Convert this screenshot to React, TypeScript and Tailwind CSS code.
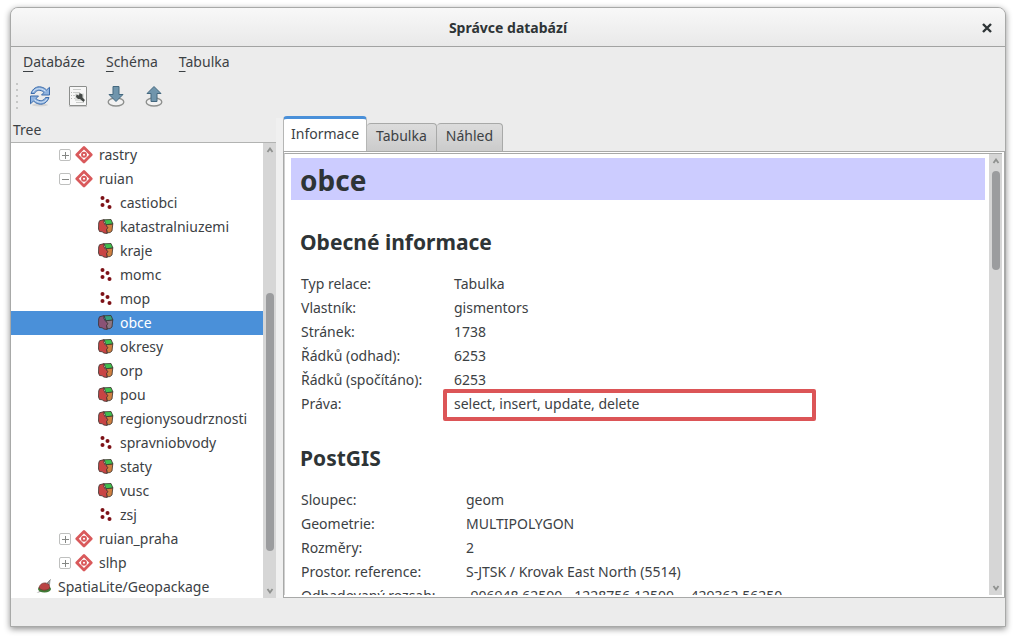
import React from "react";

type IconKind = "points" | "polygon";

const PointsIcon = () => (
  <svg width="16" height="16" viewBox="0 0 16 16" fill="#7d1116" aria-hidden="true">
    <circle cx="4.500" cy="3" r="2" />
    <circle cx="9.500" cy="6" r="2" />
    <circle cx="4.500" cy="10" r="2" />
    <circle cx="11.500" cy="12" r="2" />
  </svg>
);

const PolygonIcon = ({ dim = false }: { dim?: boolean }) => (
  <svg width="16" height="16" viewBox="0 0 16 16" stroke="#3a302c" strokeWidth="0.8" strokeLinejoin="round" aria-hidden="true">
    <path d="M8 5.500 14.800 4.800 14 12 12 13.600 9 13.800Z" fill={dim ? "#8d7683" : "#cf8040"} />
    <path d="M6 0.800 13 0.500 14.900 4.800 8 5.800Z" fill={dim ? "#36a07c" : "#3fc04f"} />
    <path d="M1.500 1.800 6 0.600 5.800 3.500 7.500 6.200 10 8.500 8.500 10.500 9.200 14.500 5.500 14 4.500 12.800 1.500 12.500 0.500 10 0.700 4Z" fill={dim ? "#8a5275" : "#c84444"} />
  </svg>
);

const SchemaIcon = () => (
  <svg width="18" height="18" viewBox="0 0 18 18" fill="none" stroke="#d9595b" strokeLinejoin="round" aria-hidden="true">
    <path d="M9 1.500 16.200 8.700 9 15.900 1.800 8.700Z" strokeWidth="2.800" />
    <circle cx="9" cy="8.700" r="2" strokeWidth="1.900" />
  </svg>
);

const FeatherIcon = () => (
  <svg width="18" height="16" viewBox="0 0 18 16" aria-hidden="true">
    <path d="M0.500 14 5 11 11.500 3.500 14.500 0.500 14 6 8 12Z" fill="#9a9c9a" />
    <ellipse cx="8.500" cy="10" rx="6.500" ry="3.500" fill="#3f7a35" />
    <path d="M3 9C3.500 5.500 6.500 3.500 10 4 13 4.500 14 7 13.500 9.500 9.500 12 5.500 11.500 3 9Z" fill="#b94343" stroke="#713030" strokeWidth="0.700" />
    <path d="M10.500 5 14.500 0.500" stroke="#7d817e" />
  </svg>
);

const RefreshIcon = () => (
  <svg width="24" height="24" viewBox="0 0 24 24" strokeLinejoin="round" aria-hidden="true">
    <ellipse cx="12" cy="21" rx="8" ry="1.500" fill="#d5d5d5" />
    <g fill="#8fb3df" stroke="#3c6cab" strokeWidth="1">
      <path d="M3 9.500C4.500 4.500 9 2 13 3 15.500 3.500 17.500 4.800 18.500 6L21.500 3.300V11H13.500L16 8.500C12.500 5 8 6 6.500 9.500Z" />
      <path d="M21 13.500C19.500 18.500 15 21 11 20 8.500 19.500 6.500 18.300 5.500 17L2.500 19.800V12H10.500L8 14.500C11.500 18 16 17 17.500 13.500Z" />
    </g>
    <path d="M5 8C7.500 4 13 3.500 17.500 7.200M19 15C16.500 19 11 19.500 6.500 15.800" fill="none" stroke="#d3e3f5" />
  </svg>
);

const SqlIcon = () => (
  <svg width="24" height="24" viewBox="0 0 24 24" aria-hidden="true">
    <path d="M3 22.500H21" stroke="#c9c9c9" />
    <rect x="3.500" y="2.500" width="17" height="19" rx="0.500" fill="#f7f7f7" stroke="#8c8e8c" />
    <path d="M7 5.500h8M7 8.500h7M7 11.500h5M8 14.500h5M10 18.500h8" stroke="#c9cbc9" />
    <path d="M5.500 8v9" stroke="#b4b6b4" strokeDasharray="1 2" />
    <path d="M9 9.500H18V17H9Z" fill="#dcdedc" />
    <path d="M10.500 10.500 13 11.500 13.500 9 16.500 10.500V13.500L19 16 17.500 18 14 15H12L10 13Z" fill="#454947" />
  </svg>
);

const TransferIcon = ({ up = false }: { up?: boolean }) => (
  <svg width="24" height="24" viewBox="0 0 24 24" strokeLinejoin="round" aria-hidden="true">
    <ellipse cx="12" cy="18" rx="7.800" ry="4" fill="#f2f2f2" stroke="#8f918f" strokeWidth="1.400" />
    <path
      d={up ? "M12 2.500 19 9.500H15V17.500H9V9.500H5Z" : "M9 2.500H15V10.500H19L12 17.500 5 10.500H9Z"}
      fill="#7095ac"
      stroke="#44687f"
    />
  </svg>
);

const Chevron = ({ up = false }: { up?: boolean }) => (
  <svg width="8" height="6" viewBox="0 0 8 6" fill="none" stroke="#8f918f" strokeWidth="1.800" aria-hidden="true">
    <path d={up ? "M1.500 5 4 1.500 6.500 5" : "M1.500 1 4 4.500 6.500 1"} />
  </svg>
);

const tables: { name: string; icon: IconKind }[] = [
  { name: "castiobci", icon: "points" },
  { name: "katastralniuzemi", icon: "polygon" },
  { name: "kraje", icon: "polygon" },
  { name: "momc", icon: "points" },
  { name: "mop", icon: "points" },
  { name: "obce", icon: "polygon" },
  { name: "okresy", icon: "polygon" },
  { name: "orp", icon: "polygon" },
  { name: "pou", icon: "polygon" },
  { name: "regionysoudrznosti", icon: "polygon" },
  { name: "spravniobvody", icon: "points" },
  { name: "staty", icon: "polygon" },
  { name: "vusc", icon: "polygon" },
  { name: "zsj", icon: "points" },
];

const general: [string, string][] = [
  ["Typ relace:", "Tabulka"],
  ["Vlastník:", "gismentors"],
  ["Stránek:", "1738"],
  ["Řádků (odhad):", "6253"],
  ["Řádků (spočítáno):", "6253"],
  ["Práva:", "select, insert, update, delete"],
];

const postgis: [string, string][] = [
  ["Sloupec:", "geom"],
  ["Geometrie:", "MULTIPOLYGON"],
  ["Rozměry:", "2"],
  ["Prostor. reference:", "S-JTSK / Krovak East North (5514)"],
  ["Odhadovaný rozsah:", "-906948.62500, -1228756.12500 - -429362.56250"],
];

function SchemaRow({ name, open = false }: { name: string; open?: boolean }) {
  return (
    <li role="treeitem" aria-expanded={open} className="flex h-6 items-center pl-12">
      <button
        aria-label={name}
        className="mr-1 flex size-3 items-center justify-center rounded-[2px] border border-[#bfc0bf] bg-white"
      >
        <svg width="8" height="8" viewBox="0 0 8 8" stroke="#858785" aria-hidden="true">
          <path d={open ? "M1 4.500H8" : "M1 4.500H8M4.500 1V8"} />
        </svg>
      </button>
      <SchemaIcon />
      <span className="pl-1.5">{name}</span>
    </li>
  );
}

function TableRow({ name, icon }: { name: string; icon: IconKind }) {
  const selected = name === "obce";
  return (
    <li
      role="treeitem"
      aria-selected={selected}
      className={`flex h-6 items-center pl-[87px] ${selected ? "bg-[#4a90d9] text-white" : ""}`}
    >
      {icon === "points" ? <PointsIcon /> : <PolygonIcon dim={selected} />}
      <span className="pl-1.5">{name}</span>
    </li>
  );
}

function Details({ rows, label }: { rows: [string, string][]; label: string }) {
  return (
    <table className="border-collapse text-left" aria-label={label}>
      <tbody>
        {rows.map(([key, value]) => (
          <tr key={key} className="h-6">
            <th scope="row" className={`p-0 font-normal whitespace-nowrap ${label === "PostGIS" ? "w-[165px] min-w-[165px]" : "w-[153px] min-w-[153px]"}`}>
              {key}
            </th>
            <td className="relative p-0 whitespace-nowrap">
              {value}
              {key === "Práva:" && (
                <span className="absolute -top-[3px] -left-[11px] h-8 w-[373px] rounded-[2px] border-4 border-[#dc5557]" />
              )}
            </td>
          </tr>
        ))}
      </tbody>
    </table>
  );
}

export default function App() {
  return (
    <div className="h-screen bg-white px-[10px] pt-[7px] pb-[9px] font-['Noto_Sans','Open_Sans',sans-serif] text-sm leading-6 text-[#3c4144]">
      <main className="flex h-full flex-col overflow-hidden rounded-t-lg border border-[#a8a9a8] bg-[#ececec] shadow-[0_2px_6px_rgba(0,0,0,0.45)]">
        <header className="flex h-[39px] shrink-0 items-center border-b border-[#a2a3a2] bg-linear-to-b from-[#f8f8f8] to-[#e9e9e9] px-[10px] pt-px">
          <span className="w-4" />
          <h1 className="flex-1 text-center text-sm font-bold text-[#2e3436]">Správce databází</h1>
          <button aria-label="Zavřít" className="flex w-4 justify-center">
            <svg width="10" height="10" viewBox="0 0 10 10" stroke="#2e3436" strokeWidth="2.400" aria-hidden="true">
              <path d="M1 1 9 9M9 1 1 9" />
            </svg>
          </button>
        </header>

        <nav className="flex h-[30px] shrink-0 items-center gap-[21px] pl-3">
          {["Databáze", "Schéma", "Tabulka"].map((item) => (
            <button key={item} className="first-letter:underline first-letter:underline-offset-4">
              {item}
            </button>
          ))}
        </nav>

        <div className="flex h-[38px] shrink-0 items-center gap-[14px] pl-[5px]">
          <svg width="3" height="26" viewBox="0 0 3 26" fill="#c6c7c6" className="-mr-[5px]" aria-hidden="true">
            <path d="M0 0h2v2H0zM0 6h2v2H0zM0 12h2v2H0zM0 18h2v2H0zM0 24h2v2H0z" />
          </svg>
          <button aria-label="Obnovit"><RefreshIcon /></button>
          <button aria-label="SQL okno"><SqlIcon /></button>
          <button aria-label="Import"><TransferIcon /></button>
          <button aria-label="Export"><TransferIcon up /></button>
        </div>

        <div className="flex min-h-0 flex-1">
          <section className="flex w-[265px] shrink-0 flex-col pt-[3px]">
            <h2 className="h-6 pl-0.5">Tree</h2>
            <div className="flex min-h-0 flex-1 border-t border-[#b2b3b2] bg-white">
              <ul role="tree" className="min-w-0 flex-1 overflow-hidden">
                <SchemaRow name="rastry" />
                <SchemaRow name="ruian" open />
                {tables.map((table) => (
                  <TableRow key={table.name} {...table} />
                ))}
                <SchemaRow name="ruian_praha" />
                <SchemaRow name="slhp" />
                <li role="treeitem" className="flex h-6 items-center gap-1 pl-[25px]">
                  <FeatherIcon />
                  <span>SpatiaLite/Geopackage</span>
                </li>
              </ul>
              <div className="flex w-[13px] shrink-0 flex-col items-center justify-between bg-[#d6d6d6] pt-1 pb-1">
                <Chevron up />
                <div className="flex w-2 flex-1 flex-col pt-[140px] pb-[37px]">
                  <div className="flex-1 rounded-full bg-[#9b9c9e]" />
                </div>
                <Chevron />
              </div>
            </div>
          </section>

          <div className="mt-[3px] w-[7px] shrink-0 bg-[#f0f0f0]" />

          <section className="flex min-w-0 flex-1 flex-col pt-px">
            <div role="tablist" className="flex h-[35px] shrink-0 items-end">
              <button role="tab" aria-selected="true" className="h-[35px] rounded-t border-x border-t-[3px] border-x-[#b5b6b5] border-t-[#4a90d9] bg-white px-[7px] pb-[2px]">
                Informace
              </button>
              {["Tabulka", "Náhled"].map((tab) => (
                <button key={tab} role="tab" aria-selected="false" className="h-7 rounded-t border-t border-r border-[#a8a9a8] bg-linear-to-b from-[#dcdcdc] to-[#cbcbcb] px-[9px] pb-[4px]">
                  {tab}
                </button>
              ))}
            </div>
            <div className="flex min-h-0 flex-1 border border-[#a8a9a8] bg-white pt-px pb-[2px]">
              <article className="min-w-0 flex-1 overflow-hidden border-t border-l border-t-[#a8a9a8] border-l-[#d0d0d0] pt-1 pr-1 pl-[6px]">
                <h2 className="h-[42px] bg-[#ccccff] pl-[9px] text-[28px] leading-[44px] font-bold text-[#2e3436]">obce</h2>
                <div className="pl-[9px]">
                  <h3 className="mt-[26px] mb-[14px] text-[21px] leading-8 font-bold text-[#2e3436]">Obecné informace</h3>
                  <div className="pl-px"><Details rows={general} label="Obecné informace" /></div>
                  <h3 className="mt-[26px] mb-[14px] text-[21px] leading-8 font-bold text-[#2e3436]">PostGIS</h3>
                  <div className="pl-px"><Details rows={postgis} label="PostGIS" /></div>
                </div>
              </article>
              <div className="mr-0.5 flex w-[13px] shrink-0 flex-col items-center border-t border-t-[#a8a9a8] bg-[#d6d6d6] pt-1 pb-1">
                <Chevron up />
                <div className="flex w-2 flex-1 flex-col pt-[7px]">
                  <div className="h-[24%] rounded-full bg-[#9b9c9e]" />
                </div>
                <Chevron />
              </div>
            </div>
          </section>
        </div>

        <footer className="h-[28px] shrink-0" />
      </main>
    </div>
  );
}
